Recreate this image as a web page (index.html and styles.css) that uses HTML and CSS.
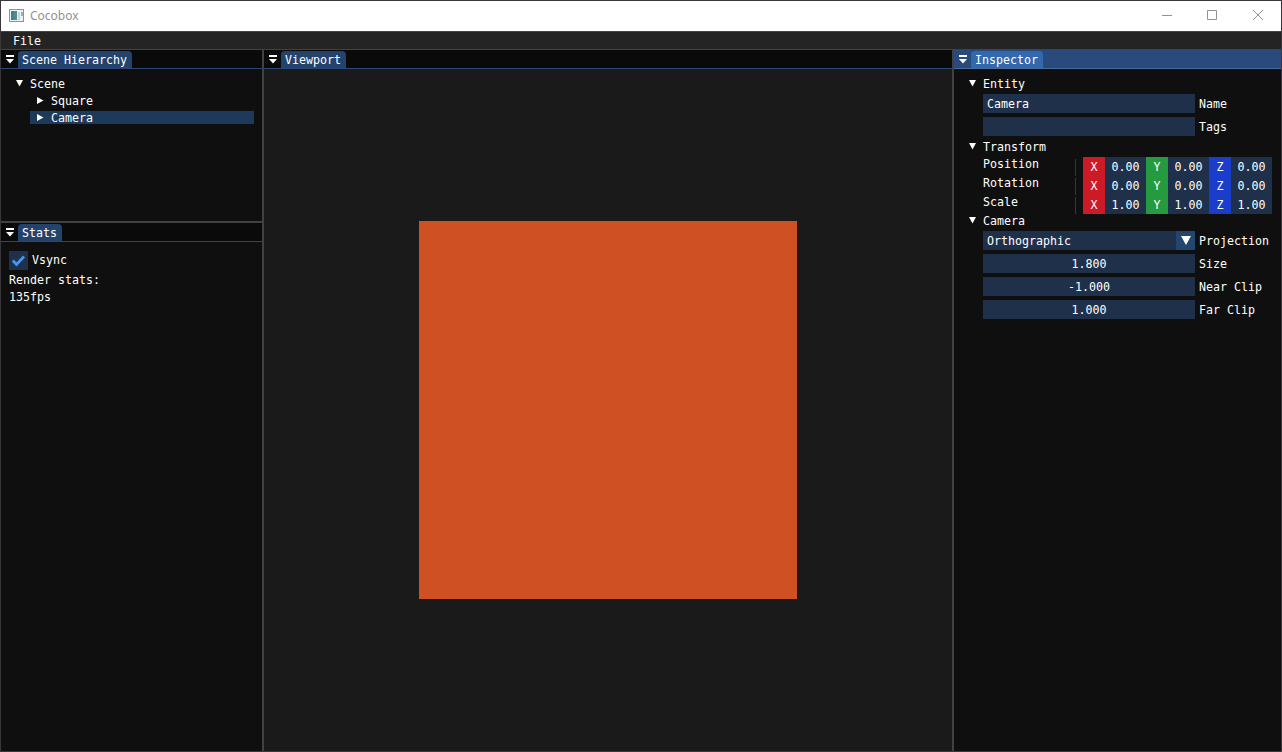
FILE: index.html
```html
<!DOCTYPE html>
<html lang="en">
<head>
<meta charset="utf-8">
<title>Cocobox</title>
<link rel="stylesheet" href="styles.css">
</head>
<body>
<div class="window">
  <header class="titlebar">
    <svg class="app-icon" width="15" height="13" viewBox="0 0 15 13"><rect x=".5" y=".5" width="14" height="12" fill="#eef2f4" stroke="#8b969c"/><rect x="2" y="2" width="6" height="9" fill="#4b9189"/><rect x="2" y="2" width="3" height="9" fill="#467f9b"/><rect x="9" y="3" width="2" height="8" fill="#c9d5da"/><rect x="12" y="3" width="2" height="4" fill="#9eafb6"/></svg>
    <span class="app-name">Cocobox</span>
    <svg class="controls" width="104" height="12" viewBox="0 0 104 12" fill="none" stroke="#929292"><path d="M0 5.500h10M45.500.5h9v9h-9z"/><path d="M91 0l10 10M101 0L91 10"/></svg>
  </header>
  <nav class="menubar"><span>File</span></nav>
  <main class="dock">
    <div class="left">
      <section class="panel hierarchy">
        <div class="tabbar"><svg class="tab-menu" width="9" height="9"><path d="M0 0h8v2H0zM0 4h8L4 8.500z"/></svg><span class="tab">Scene Hierarchy</span></div>
        <div class="tree">
          <div class="node root"><svg class="arrow" width="7" height="7"><path d="M0 0h7L3.500 6.500z"/></svg><span>Scene</span></div>
          <div class="node child"><svg class="arrow" width="7" height="7"><path d="M0 0v7L6.500 3.500z"/></svg><span>Square</span></div>
          <div class="node child selected"><svg class="arrow" width="7" height="7"><path d="M0 0v7L6.500 3.500z"/></svg><span>Camera</span></div>
        </div>
      </section>
      <section class="panel stats">
        <div class="tabbar"><svg class="tab-menu" width="9" height="9"><path d="M0 0h8v2H0zM0 4h8L4 8.500z"/></svg><span class="tab">Stats</span></div>
        <div class="stats-body">
          <div class="check-row"><span class="checkbox"><svg width="19" height="19"><path d="M3.800 9.500l3.700 4L15 5.500" fill="none" stroke="#4296fa" stroke-width="2.800"/></svg></span><span>Vsync</span></div>
          <div>Render stats:</div>
          <div>135fps</div>
        </div>
      </section>
    </div>
    <section class="panel viewport">
      <div class="tabbar"><svg class="tab-menu" width="9" height="9"><path d="M0 0h8v2H0zM0 4h8L4 8.500z"/></svg><span class="tab">Viewport</span></div>
      <div class="scene"><div class="square"></div></div>
    </section>
    <section class="panel inspector">
      <div class="tabbar"><svg class="tab-menu" width="9" height="9"><path d="M0 0h8v2H0zM0 4h8L4 8.500z"/></svg><span class="tab">Inspector</span></div>
      <div class="props">
        <div class="node"><svg class="arrow" width="7" height="7"><path d="M0 0h7L3.500 6.500z"/></svg><span>Entity</span></div>
        <div class="field"><span class="input">Camera</span><span class="label">Name</span></div>
        <div class="field"><span class="input"></span><span class="label">Tags</span></div>
        <div class="node"><svg class="arrow" width="7" height="7"><path d="M0 0h7L3.500 6.500z"/></svg><span>Transform</span></div>
        <div class="vectors">
          <div class="vec"><span class="vec-name">Position</span><span class="axis x">X</span><span class="val">0.00</span><span class="axis y">Y</span><span class="val">0.00</span><span class="axis z">Z</span><span class="val">0.00</span></div>
          <div class="vec"><span class="vec-name">Rotation</span><span class="axis x">X</span><span class="val">0.00</span><span class="axis y">Y</span><span class="val">0.00</span><span class="axis z">Z</span><span class="val">0.00</span></div>
          <div class="vec"><span class="vec-name">Scale</span><span class="axis x">X</span><span class="val">1.00</span><span class="axis y">Y</span><span class="val">1.00</span><span class="axis z">Z</span><span class="val">1.00</span></div>
        </div>
        <div class="node after-vectors"><svg class="arrow" width="7" height="7"><path d="M0 0h7L3.500 6.500z"/></svg><span>Camera</span></div>
        <div class="field"><span class="input combo">Orthographic<span class="drop"><svg width="10" height="9"><path d="M0 0h10L5 9z"/></svg></span></span><span class="label">Projection</span></div>
        <div class="field"><span class="input number">1.800</span><span class="label">Size</span></div>
        <div class="field"><span class="input number">-1.000</span><span class="label">Near Clip</span></div>
        <div class="field"><span class="input number">1.000</span><span class="label">Far Clip</span></div>
      </div>
    </section>
  </main>
</div>
</body>
</html>
```
FILE: styles.css
```css
* { box-sizing: border-box; }
body { margin: 0; background: #0f0f0f; overflow: hidden; }
svg { display: block; flex: none; }
.tab-menu, .arrow, .drop svg { fill: #fff; }

.window {
  width: 1282px;
  height: 752px;
  display: flex;
  flex-direction: column;
  border: 1px solid #39373a;
  color: #fff;
  font: 11.63px/13px "DejaVu Sans Mono", monospace;
  white-space: nowrap;
}
.titlebar {
  height: 30px;
  flex: none;
  display: flex;
  align-items: center;
  padding: 0 13px 0 8px;
  background: #fff;
}
.app-icon { margin: 0 6px 2px 0; }
.app-name { color: #929292; font: 12px/16px "Noto Sans", "Open Sans", sans-serif; }
.controls { margin-left: auto; margin-right: 2px; }
.menubar {
  height: 19px;
  flex: none;
  padding: 3px 12px 0;
  background: #242424;
  border-top: 1px solid #434346;
  border-bottom: 1px solid #434346;
}
.dock { flex: 1; min-height: 0; display: flex; }
.left {
  width: 263px;
  display: flex;
  flex-direction: column;
  border-right: 2px solid #404045;
}
.panel { display: flex; flex-direction: column; background: #0f0f0f; }
.hierarchy { height: 173px; border-bottom: 2px solid #404045; }
.stats { flex: 1; }
.tabbar {
  height: 19px;
  flex: none;
  display: flex;
  padding: 1px 0 0 5px;
  background: #0a0a0a;
  border-bottom: 1px solid #294674;
}
.tab-menu { margin: 4px 3px 0 0; }
.tab {
  height: 17px;
  padding: 3px 5px 0 4px;
  border-radius: 4px 4px 0 0;
  background: #23426c;
}
.node { height: 13px; line-height: 15px; display: flex; }
.arrow { margin: 3px 7px 0 0; }
.tree { padding: 8px; display: flex; flex-direction: column; gap: 4px; }
.root { padding-left: 7px; }
.child { margin-left: 21px; padding-left: 7px; }
.selected { background: #1e3a5a; }
.stats-body { padding: 9px 8px; display: flex; flex-direction: column; gap: 4px; }
.check-row { height: 19px; display: flex; align-items: center; gap: 4px; }
.checkbox { width: 19px; height: 19px; background: #1f304b; }

.viewport { width: 688px; background: #1a1a1a; }
.scene { flex: 1; display: grid; place-items: center; }
.square { width: 378px; height: 378px; background: #cf5022; }

.inspector { flex: 1; border-left: 2px solid #404045; }
.inspector .tabbar { background: #294a7a; border-color: #466da0; }
.inspector .tab { background: #3268ac; }
.props { padding: 8px; display: flex; flex-direction: column; gap: 4px; }
.props .node { padding-left: 7px; }
.field { height: 19px; margin-left: 21px; display: flex; gap: 4px; }
.label { padding-top: 4px; }
.input {
  width: 212px;
  height: 19px;
  padding: 4px 4px 0;
  background: #1f304b;
}
.number { text-align: center; }
.combo { display: flex; justify-content: space-between; padding-right: 0; }
.drop {
  width: 19px;
  height: 19px;
  margin-top: -4px;
  display: grid;
  place-items: center;
  background: #23466f;
}
.vec { height: 19px; margin-left: 21px; display: flex; }
.vec-name { width: 93px; height: 17px; margin: 2px 7px 0 0; border-right: 1px solid #36363b; line-height: 11px; }
.axis, .val { height: 19px; padding-top: 4px; text-align: center; }
.axis { width: 22px; }
.val { width: 41px; background: #1f304b; }
.x { background: #cc1a26; }
.y { background: #259a3e; }
.z { background: #1a3dcc; }
.after-vectors { margin-top: -4px; }
```
